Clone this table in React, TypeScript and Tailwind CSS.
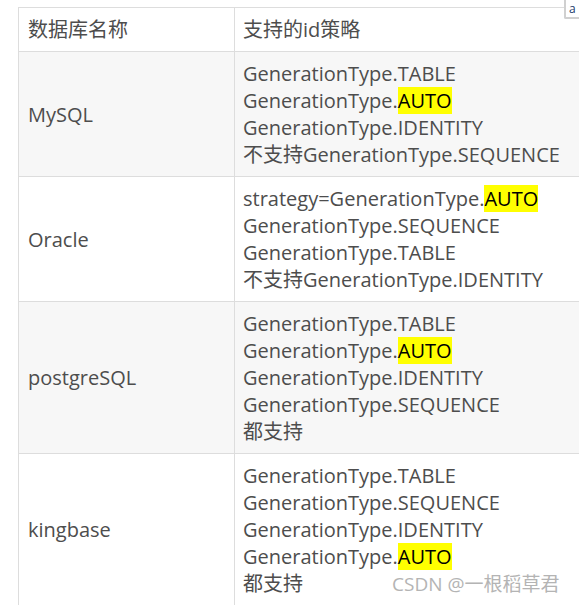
function Auto() {
  return <span className="bg-[#ffff00] text-black">AUTO</span>;
}

const data = [
  {
    name: "MySQL",
    bg: "bg-[#f7f7f7]",
    lines: [
      <>GenerationType.TABLE</>,
      <>GenerationType.<Auto /></>,
      <>GenerationType.IDENTITY</>,
      <>不支持GenerationType.SEQUENCE</>,
    ],
  },
  {
    name: "Oracle",
    bg: "bg-white",
    lines: [
      <>strategy=GenerationType.<Auto /></>,
      <>GenerationType.SEQUENCE</>,
      <>GenerationType.TABLE</>,
      <>不支持GenerationType.IDENTITY</>,
    ],
  },
  {
    name: "postgreSQL",
    bg: "bg-[#f7f7f7]",
    lines: [
      <>GenerationType.TABLE</>,
      <>GenerationType.<Auto /></>,
      <>GenerationType.IDENTITY</>,
      <>GenerationType.SEQUENCE</>,
      <>都支持</>,
    ],
  },
  {
    name: "kingbase",
    bg: "bg-white",
    lines: [
      <>GenerationType.TABLE</>,
      <>GenerationType.SEQUENCE</>,
      <>GenerationType.IDENTITY</>,
      <>GenerationType.<Auto /></>,
      <>都支持</>,
    ],
  },
];

export default function App() {
  return (
    <div className="relative h-[605px] w-[579px] overflow-hidden bg-white font-['Open_Sans','Noto_Sans_CJK_SC',sans-serif] text-[20px] leading-[27px] text-[#4d4d4d]">
      <div className="pl-[18px] pt-[7px]">
        <table className="w-[640px] border-collapse">
          <tbody>
            <tr className="bg-white">
              <td className="w-[216px] border border-[#dddddd] py-[8px] pl-[9px] align-middle">数据库名称</td>
              <td className="border border-[#dddddd] py-[8px] pl-[8px] align-middle">支持的id策略</td>
            </tr>
            {data.map((r) => (
              <tr key={r.name} className={r.bg}>
                <td className="border border-[#dddddd] py-[8px] pl-[9px] align-middle">{r.name}</td>
                <td className="border border-[#dddddd] py-[8px] pl-[8px] align-middle">
                  {r.lines.map((l, i) => (
                    <div key={i} className="whitespace-nowrap">{l}</div>
                  ))}
                </td>
              </tr>
            ))}
          </tbody>
        </table>
      </div>

      <div className="absolute right-0 top-0 h-[19px] w-[15px] rounded-bl-[2px] border-b-2 border-l-2 border-[#d0d0d0] bg-white pl-[3px] pt-[2px] text-[12px] leading-[13px] text-[#1a3a6a]">
        a
      </div>

      <div className="absolute left-[392px] top-[571px] text-[19px] leading-[27px] text-[#b4b4b4] [text-shadow:0_0_1px_#fff]">
        CSDN @一根稻草君
      </div>
    </div>
  );
}
